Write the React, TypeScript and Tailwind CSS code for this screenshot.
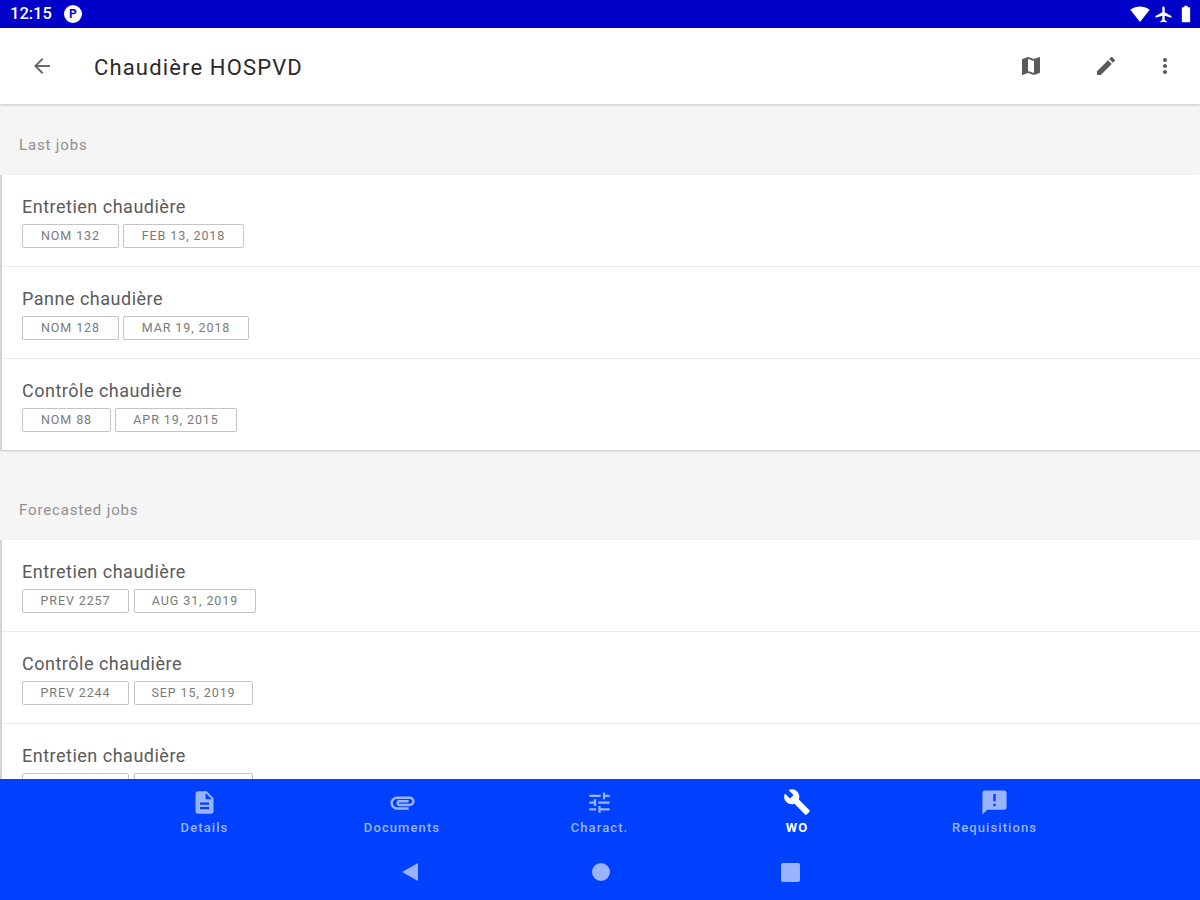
import React from "react";
import { MdArrowBack, MdMap, MdEdit, MdMoreVert, MdDescription, MdAttachment, MdTune, MdBuild, MdAnnouncement, MdSignalWifi4Bar, MdAirplanemodeActive, MdBatteryFull } from "react-icons/md";

type Job = { title: string; a: string; b: string; wa: string; wb: string };

function Row({ job, last, gap }: { job: Job; last?: boolean; gap: string }) {
  return (
    <div className={"pl-[20px] pt-[20px] " + (last ? "h-[91px]" : "h-[92px] border-b border-[#ececec]")}>
      <div className="text-[18px] leading-[24px] tracking-[0.5px] text-[#5a5a5a]">{job.title}</div>
      <div className={"flex mt-[5px] " + gap}>
        <div className={"h-[24px] border border-[#c4c4c4] rounded-[2px] flex items-center justify-center text-[12.5px] tracking-[0.9px] text-[#7a7a7a] " + job.wa}>{job.a}</div>
        <div className={"h-[24px] border border-[#c4c4c4] rounded-[2px] flex items-center justify-center text-[12.5px] tracking-[0.9px] text-[#7a7a7a] " + job.wb}>{job.b}</div>
      </div>
    </div>
  );
}

function Section({ label, jobs, labelClass, gap }: { label: string; jobs: Job[]; labelClass: string; gap: string }) {
  return (
    <section>
      <div className={"pl-[19px] text-[15px] leading-[20px] tracking-[0.85px] text-[#8f8f8f] " + labelClass}>{label}</div>
      <div className="bg-white border-l-2 border-[#d4d4d4] shadow-[0_1px_2px_rgba(0,0,0,0.2)]">
        {jobs.map((j, i) => (
          <Row key={i} job={j} gap={gap} last={i === jobs.length - 1} />
        ))}
      </div>
    </section>
  );
}

function NavItem({ icon, label, active }: { icon: React.ReactNode; label: string; active?: boolean }) {
  return (
    <div className={"w-[197.5px] flex flex-col items-center " + (active ? "text-white" : "text-[#99b3ff]")}>
      <div className="h-[28px] flex items-center justify-center">{icon}</div>
      <div className={"text-[13px] leading-[16px] mt-[4px] tracking-[1.1px] " + (active ? "font-bold" : "font-medium")}>{label}</div>
    </div>
  );
}

const last: Job[] = [
  { title: "Entretien chaudière", a: "NOM 132", b: "FEB 13, 2018", wa: "w-[97px]", wb: "w-[121px]" },
  { title: "Panne chaudière", a: "NOM 128", b: "MAR 19, 2018", wa: "w-[97px]", wb: "w-[126px]" },
  { title: "Contrôle chaudière", a: "NOM 88", b: "APR 19, 2015", wa: "w-[89px]", wb: "w-[122px]" },
];
const next: Job[] = [
  { title: "Entretien chaudière", a: "PREV 2257", b: "AUG 31, 2019", wa: "w-[107px]", wb: "w-[122px]" },
  { title: "Contrôle chaudière", a: "PREV 2244", b: "SEP 15, 2019", wa: "w-[107px]", wb: "w-[119px]" },
  { title: "Entretien chaudière", a: "", b: "", wa: "w-[107px]", wb: "w-[119px]" },
];

export default function App() {
  return (
    <div className="w-[1200px] h-[900px] flex flex-col overflow-hidden bg-[#f5f5f5] font-['Roboto',sans-serif]">
      <header className="h-[28px] shrink-0 bg-[#0000c8] flex items-center justify-between pl-[10px] pr-[4px] text-white">
        <div className="flex items-center gap-[12px]">
          <span className="text-[16.5px] font-medium">12:15</span>
          <span className="w-[18px] h-[18px] rounded-full bg-white flex items-center justify-center text-[#0000c8] text-[12px] font-bold leading-none">P</span>
        </div>
        <div className="flex items-center">
          <MdSignalWifi4Bar size={20} />
          <MdAirplanemodeActive size={19} className="ml-[4px]" />
          <MdBatteryFull size={20} className="ml-[3px]" />
        </div>
      </header>

      <div className="h-[76px] shrink-0 bg-white shadow-[0_1px_3px_rgba(0,0,0,0.2)] z-10 flex items-center pl-[30px] text-[#2a2a2a] relative">
        <MdArrowBack size={24} className="text-[#6a6a6a]" />
        <h1 className="ml-[40px] mt-[2px] text-[22px] font-normal tracking-[1.15px]">Chaudière HOSPVD</h1>
        <div className="ml-auto flex items-center text-[#5a5a5a]">
          <MdMap size={24} />
          <MdEdit size={24} className="ml-[51px]" />
          <MdMoreVert size={24} className="ml-[35px] mr-[23px]" />
        </div>
      </div>

      <main className="flex-1 min-h-0 overflow-hidden">
        <Section label="Last jobs" jobs={last} gap="gap-[4px]" labelClass="pt-[31px] pb-[20px]" />
        <Section label="Forecasted jobs" jobs={next} gap="gap-[5px]" labelClass="pt-[50px] pb-[20px]" />
      </main>

      <nav className="h-[121px] shrink-0 bg-[#0041ff] z-10">
        <div className="flex justify-center pt-[9px] pr-[1px]">
          <NavItem icon={<MdDescription size={27} />} label="Details" />
          <NavItem icon={<MdAttachment size={29} />} label="Documents" />
          <NavItem icon={<MdTune size={27} />} label="Charact." />
          <NavItem active icon={<MdBuild size={28} />} label="WO" />
          <NavItem icon={<MdAnnouncement size={29} />} label="Requisitions" />
        </div>
        <div className="flex items-center justify-center mt-[26px] text-[#99b3ff]">
          <svg width="18" height="20" viewBox="0 0 18 20" className="mr-[173px]"><path d="M1 10 L17 1 V19 Z" fill="currentColor" /></svg>
          <span className="w-[18px] h-[18px] rounded-full bg-[#99b3ff]" />
          <span className="w-[19px] h-[19px] rounded-[2px] bg-[#99b3ff] ml-[171px]" />
        </div>
      </nav>
    </div>
  );
}
